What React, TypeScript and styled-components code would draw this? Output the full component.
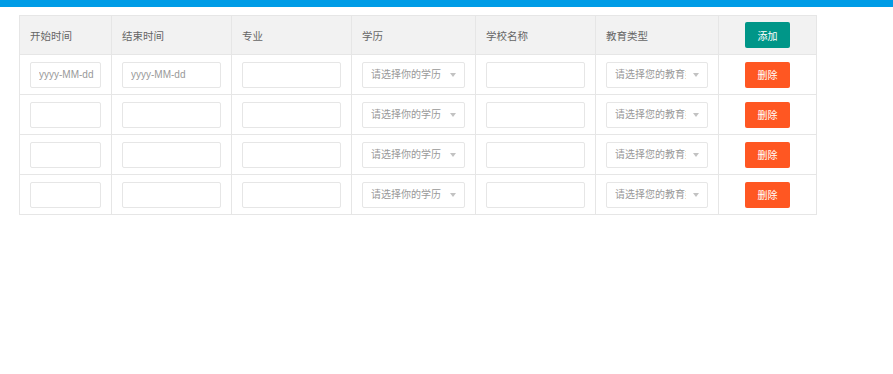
import React from "react";
import styled, { createGlobalStyle } from "styled-components";

const Global = createGlobalStyle`
  html, body { margin: 0; padding: 0; background: #fff; }
  body { font-family: "Liberation Sans", "Noto Sans CJK SC", sans-serif; color: #666; }
  * { box-sizing: border-box; }
`;

const TopBar = styled.div`
  height: 7px;
  background: #009ce6;
`;

const Page = styled.div`
  padding: 8px 19px;
`;

const Grid = styled.div`
  display: grid;
  width: 798px;
  grid-template-columns: 91px 119px 119px 123px 119px 122px 97px;
  grid-template-rows: 38px repeat(4, 39px);
  gap: 1px;
  background: #e6e6e6;
  border: 1px solid #e6e6e6;
`;

const Cell = styled.div<{ $head?: boolean; $center?: boolean }>`
  display: flex;
  align-items: center;
  justify-content: ${(p) => (p.$center ? "center" : "flex-start")};
  padding: 0 10px;
  background: ${(p) => (p.$head ? "#f2f2f2" : "#fff")};
  font-size: 10.5px;
  color: #666;
  min-width: 0;
`;

const Field = styled.input`
  width: 100%;
  height: 26px;
  border: 1px solid #e6e6e6;
  border-radius: 2px;
  padding: 0 4px 0 8px;
  font-family: "Liberation Sans", "Noto Sans CJK SC", sans-serif;
  font-size: 10px;
  color: #666;
  background: #fff;
  outline: none;
  &::placeholder { color: #999; }
`;

const SelectBox = styled.div`
  position: relative;
  width: 100%;
`;

const SelectField = styled(Field)`
  padding-right: 21px;
  cursor: pointer;
`;

const Arrow = styled.span`
  position: absolute;
  right: 9px;
  top: 50%;
  margin-top: -2px;
  width: 0;
  height: 0;
  border-left: 3.5px solid transparent;
  border-right: 3.5px solid transparent;
  border-top: 4px solid #c2c2c2;
`;

const Btn = styled.button<{ $kind: "add" | "del" }>`
  width: 45px;
  height: 26px;
  border: none;
  border-radius: 2px;
  background: ${(p) => (p.$kind === "add" ? "#009688" : "#ff5722")};
  color: #fff;
  font-family: "Liberation Sans", "Noto Sans CJK SC", sans-serif;
  font-size: 10px;
  padding: 0;
  cursor: pointer;
`;

const Select = ({ placeholder }: { placeholder: string }) => (
  <SelectBox>
    <SelectField readOnly placeholder={placeholder} />
    <Arrow />
  </SelectBox>
);

const heads = ["开始时间", "结束时间", "专业", "学历", "学校名称", "教育类型"];

export default function App() {
  const rows = [0, 1, 2, 3];
  return (
    <>
      <Global />
      <TopBar />
      <Page>
        <Grid>
          {heads.map((h) => (
            <Cell $head key={h}>{h}</Cell>
          ))}
          <Cell $head $center>
            <Btn $kind="add">添加</Btn>
          </Cell>
          {rows.map((r) => (
            <React.Fragment key={r}>
              <Cell><Field placeholder={r === 0 ? "yyyy-MM-dd" : ""} /></Cell>
              <Cell><Field placeholder={r === 0 ? "yyyy-MM-dd" : ""} /></Cell>
              <Cell><Field /></Cell>
              <Cell><Select placeholder="请选择你的学历" /></Cell>
              <Cell><Field /></Cell>
              <Cell><Select placeholder="请选择您的教育类型" /></Cell>
              <Cell $center><Btn $kind="del">删除</Btn></Cell>
            </React.Fragment>
          ))}
        </Grid>
      </Page>
    </>
  );
}
